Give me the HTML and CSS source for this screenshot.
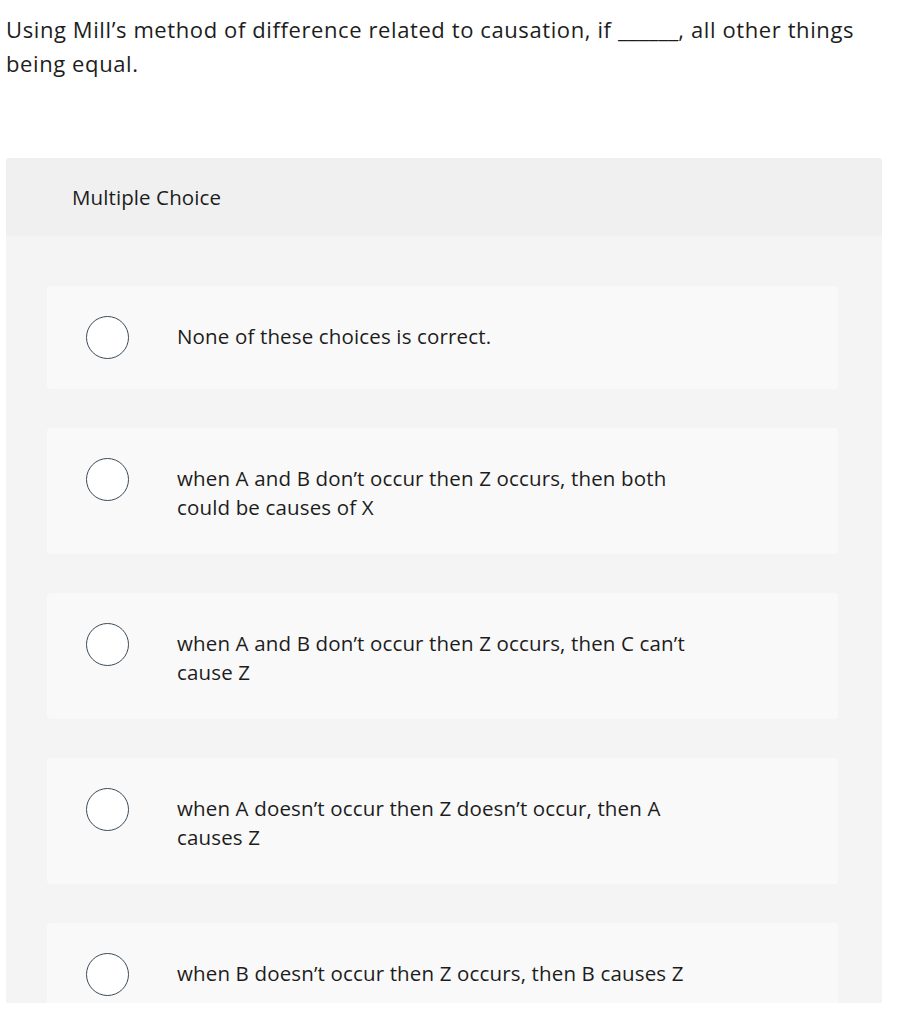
FILE: index.html
```html
<!DOCTYPE html>
<html lang="en">
<head>
<meta charset="utf-8">
<title>Multiple Choice</title>
<link rel="stylesheet" href="styles.css">
</head>
<body>
<div class="page">
  <p class="question">Using Mill’s method of difference related to causation, if <span class="blank">______</span>, all other things being equal.</p>
  <section class="card">
    <header class="card-head">Multiple Choice</header>
    <div class="card-body">
      <label class="option"><span class="radio"></span><span class="opt-text">None of these choices is correct.</span></label>
      <label class="option"><span class="radio"></span><span class="opt-text">when A and B don’t occur then Z occurs, then both could be causes of X</span></label>
      <label class="option"><span class="radio"></span><span class="opt-text">when A and B don’t occur then Z occurs, then C can’t cause Z</span></label>
      <label class="option"><span class="radio"></span><span class="opt-text">when A doesn’t occur then Z doesn’t occur, then A causes Z</span></label>
      <label class="option"><span class="radio"></span><span class="opt-text">when B doesn’t occur then Z occurs, then B causes Z</span></label>
    </div>
  </section>
</div>
</body>
</html>
```
FILE: styles.css
```css
html, body {
  margin: 0;
  padding: 0;
  background: #ffffff;
}
body {
  font-family: "Open Sans", "Liberation Sans", sans-serif;
  color: #1d1d1d;
}
.page {
  height: 1003px;
  overflow: hidden;
  padding: 0 38px 0 6px;
}
.question {
  margin: 0;
  padding-top: 12px;
  font-size: 22px;
  letter-spacing: 0.6px;
  line-height: 34px;
  max-width: 876px;
}
.blank {
  letter-spacing: 0;
  font-size: 23px;
}
.card {
  margin-top: 78px;
  border-radius: 3px 3px 0 0;
  overflow: hidden;
}
.card-head {
  background: #f0f0f0;
  height: 78px;
  display: flex;
  align-items: center;
  padding-left: 66px;
  font-size: 20.5px;
  letter-spacing: 0.1px;
}
.card-body {
  background: #f4f4f4;
  padding: 50px 44px 40px 41px;
  display: flex;
  flex-direction: column;
  gap: 39px;
}
.option {
  display: flex;
  align-items: flex-start;
  gap: 48px;
  background: #f9f9f9;
  border-radius: 4px;
  padding: 30px 39px;
}
.radio {
  flex: none;
  width: 41px;
  height: 41px;
  border: 1px solid #3b4a57;
  border-radius: 50%;
  background: #ffffff;
}
.opt-text {
  font-size: 20.5px;
  letter-spacing: 0.15px;
  line-height: 29px;
  padding: 6px 0 2px;
  max-width: 522px;
}
```
